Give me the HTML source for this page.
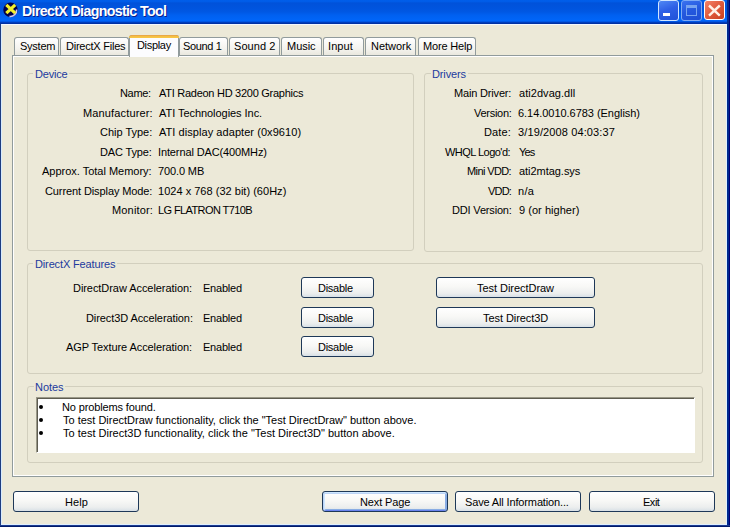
<!DOCTYPE html>
<html><head><meta charset="utf-8"><style>
html,body{margin:0;padding:0;}
body{width:731px;height:529px;overflow:hidden;background:#fff;position:relative;font-family:'Liberation Sans', sans-serif;}
div{position:absolute;box-sizing:border-box;}
.win{left:0;top:0;width:730px;height:527px;background:linear-gradient(90deg,#1E3C80 0px,#1E3C80 1px,#002A8E 1px,#002A8E 727px,#002A8E 729px,#000078 729px);}
.frb{left:0;top:525px;width:730px;height:2px;background:linear-gradient(#1A3A90 0px,#1A3A90 1px,#001A6A 1px);}
.client{left:1px;top:24px;width:726px;height:501px;background:#ECE9D8;border-left:1px solid #D8ECFF;border-top:1px solid #F4F8FF;border-right:1px solid #E0F0FF;border-bottom:1px solid #DDEEFF;}
.title{left:0px;top:0;width:727px;height:24px;background:linear-gradient(#005EEA 0px,#005CE8 1.5px,#0052DA 3px,#0054DE 8px,#0058E4 12px,#0060F0 15px,#0066FA 21px,#0048D0 22px,#0032A8 23px,#0030A0 24px);}
.frl{left:0;top:24px;width:1px;height:503px;background:#1E3C80;}
.t{font-size:11px;line-height:13px;white-space:nowrap;color:#000;}
.tt{font-size:14.2px;line-height:16px;font-weight:bold;white-space:nowrap;color:#fff;text-shadow:1px 1px 0 #0A1E8C;}
.tab{border:1px solid #919B9C;border-bottom:none;border-radius:3px 3px 0 0;background:linear-gradient(#FFFFFF,#F4F3EE 60%,#E8E6DC);}
.tabsel{border:1px solid #919B9C;border-bottom:none;border-radius:3px 3px 0 0;background:#FCFCFE;}
.tabor{border-radius:3px 3px 0 0;background:linear-gradient(#E8A848 0px,#E8A848 1px,#F4BC40 1px,#F8C848 3px);}
.panel{border:1px solid #919B9C;background:#ECE9D8;box-shadow:inset 1px 1px 0 #fff, inset -1px -1px 0 #fff;}
.grp{border:1px solid #D2CFBE;border-radius:3px;}
.gbg{background:#ECE9D8;}
.btn{border:1px solid #1E3858;border-radius:3px;background:linear-gradient(#FFFFFF,#F8F8F6 45%,#ECEEEE 80%,#D8E0E6);}
.def{box-shadow:inset 0 1px 0 #CEE7FF, inset 1px 0 0 #BCD4F6, inset -1px 0 0 #89ADE4, inset 0 -1px 0 #6982EE, inset 0 2px 0 #BCD4F6, inset 2px 0 0 #CEE7FF, inset -2px 0 0 #89ADE4, inset 0 -2px 0 #89ADE4;}
.list{background:#fff;border-top:1px solid #9A9888;border-left:1px solid #9A9888;border-right:1px solid #FFFFFF;border-bottom:1px solid #FFFFFF;box-shadow:inset 1px 1px 0 #5E5C50;}
.bul{background:#000;border-radius:2px;}
.tbb{border:1px solid #fff;border-radius:3px;}
</style></head><body>
<div class="win"></div>
<div class="title"></div>
<div class="frl"></div><div class="frb"></div>
<div class="client"></div>
<!-- icon -->
<svg style="position:absolute;left:0px;top:0px" width="22" height="22" viewBox="0 0 22 22">
<circle cx="10.5" cy="9.8" r="7.2" fill="#000048"/>
<path d="M16.6 9.5 A6.3 6.3 0 0 1 9.5 16.4" stroke="#C8C4F4" stroke-width="1.6" fill="none"/>
<path d="M6.3 4.8 L15.2 13.2 M15.2 4.8 L6.3 13.2" stroke="#F2F02C" stroke-width="3.2"/>
</svg>
<!-- title buttons -->
<div class="tbb" style="left:658px;top:0px;width:21px;height:21px;border-color:#D0E6FF;background:linear-gradient(160deg,#5088F4,#2E60E6 45%,#2052D8);"></div>
<div style="left:663px;top:13px;width:7px;height:3px;background:#fff;"></div>
<div class="tbb" style="left:681px;top:0px;width:21px;height:21px;background:linear-gradient(160deg,#3A72F0,#2458DE 50%,#1E4ED4);border-color:#7EAAF4;"></div>
<div style="left:686px;top:5px;width:11px;height:11px;border:1px solid #78A4F0;border-top-width:3px;"></div>
<div class="tbb" style="left:704px;top:0px;width:21px;height:20px;background:linear-gradient(135deg,#F48468,#E05A3C 50%,#C8401E);"></div>
<svg style="position:absolute;left:704px;top:0px" width="21" height="21" viewBox="0 0 21 21"><path d="M5 5.5 L15.8 15.6 M15.8 5.5 L5 15.6" stroke="#FFF2E6" stroke-width="2.4"/></svg>
<div class="tab" style="left:14px;top:37px;width:45px;height:19px;"></div><div class="tab" style="left:60px;top:37px;width:69px;height:19px;"></div><div class="tab" style="left:179px;top:37px;width:49px;height:19px;"></div><div class="tab" style="left:229px;top:37px;width:51px;height:19px;"></div><div class="tab" style="left:281px;top:37px;width:41px;height:19px;"></div><div class="tab" style="left:323px;top:37px;width:41px;height:19px;"></div><div class="tab" style="left:365px;top:37px;width:51px;height:19px;"></div><div class="tab" style="left:418px;top:37px;width:58px;height:19px;"></div><div class="panel" style="left:12px;top:55px;width:702px;height:422px;"></div><div class="tabsel" style="left:129px;top:35px;width:50px;height:22px;"></div><div class="tabor" style="left:129px;top:35px;width:50px;height:3px;"></div><div class="grp" style="left:27px;top:73px;width:387px;height:178px;"></div><div class="grp" style="left:424px;top:73px;width:279px;height:179px;"></div><div class="grp" style="left:27px;top:263px;width:676px;height:111px;"></div><div class="grp" style="left:27px;top:386px;width:676px;height:77px;"></div><div class="gbg" style="left:33px;top:66px;width:36px;height:15px;"></div><div class="gbg" style="left:431px;top:66px;width:37px;height:15px;"></div><div class="gbg" style="left:33px;top:256px;width:84px;height:15px;"></div><div class="gbg" style="left:34px;top:379px;width:31px;height:15px;"></div><div class="btn" style="left:301px;top:277px;width:73px;height:21px;"></div><div class="btn" style="left:301px;top:307px;width:73px;height:21px;"></div><div class="btn" style="left:301px;top:336px;width:73px;height:21px;"></div><div class="btn" style="left:436px;top:277px;width:159px;height:21px;"></div><div class="btn" style="left:436px;top:307px;width:159px;height:21px;"></div><div class="btn" style="left:13px;top:491px;width:126px;height:21px;"></div><div class="btn def" style="left:322px;top:491px;width:126px;height:21px;"></div><div class="btn" style="left:455px;top:491px;width:126px;height:21px;"></div><div class="btn" style="left:589px;top:491px;width:126px;height:21px;"></div><div class="list" style="left:36px;top:397px;width:659px;height:56px;"></div><div class="bul" style="left:39px;top:405px;width:4px;height:4px;"></div><div class="bul" style="left:39px;top:418px;width:4px;height:4px;"></div><div class="bul" style="left:39px;top:431px;width:4px;height:4px;"></div>
<div class="tt" style="left:22px;top:3px;letter-spacing:-0.64px;color:#fff;">DirectX Diagnostic Tool</div><div class="t" style="left:20px;top:40px;letter-spacing:-0.24px;">System</div><div class="t" style="left:66px;top:40px;letter-spacing:-0.23px;">DirectX Files</div><div class="t" style="left:137px;top:39px;letter-spacing:-0.32px;">Display</div><div class="t" style="left:183px;top:40px;letter-spacing:-0.37px;">Sound 1</div><div class="t" style="left:234px;top:40px;letter-spacing:0.05px;">Sound 2</div><div class="t" style="left:287px;top:40px;letter-spacing:-0.03px;">Music</div><div class="t" style="left:328px;top:40px;letter-spacing:0.10px;">Input</div><div class="t" style="left:371px;top:40px;letter-spacing:-0.03px;">Network</div><div class="t" style="left:423px;top:40px;letter-spacing:-0.17px;">More Help</div><div class="t" style="left:35px;top:68px;letter-spacing:-0.20px;color:#213A9E;">Device</div><div class="t" style="left:432px;top:68px;letter-spacing:-0.13px;color:#213A9E;">Drivers</div><div class="t" style="left:35px;top:258px;letter-spacing:-0.14px;color:#213A9E;">DirectX Features</div><div class="t" style="left:35px;top:381px;letter-spacing:-0.03px;color:#213A9E;">Notes</div><div class="t" style="left:120px;top:87px;letter-spacing:-0.33px;">Name:</div><div class="t" style="left:83px;top:107px;letter-spacing:0.15px;">Manufacturer:</div><div class="t" style="left:100px;top:126px;letter-spacing:-0.02px;">Chip Type:</div><div class="t" style="left:100px;top:146px;letter-spacing:-0.15px;">DAC Type:</div><div class="t" style="left:42px;top:165px;letter-spacing:-0.01px;">Approx. Total Memory:</div><div class="t" style="left:45px;top:185px;letter-spacing:-0.10px;">Current Display Mode:</div><div class="t" style="left:112px;top:204px;letter-spacing:0.16px;">Monitor:</div><div class="t" style="left:159px;top:87px;letter-spacing:-0.27px;">ATI Radeon HD 3200 Graphics</div><div class="t" style="left:159px;top:107px;letter-spacing:-0.05px;">ATI Technologies Inc.</div><div class="t" style="left:159px;top:126px;letter-spacing:0.06px;">ATI display adapter (0x9610)</div><div class="t" style="left:158px;top:146px;letter-spacing:-0.12px;">Internal DAC(400MHz)</div><div class="t" style="left:158px;top:165px;letter-spacing:-0.12px;">700.0 MB</div><div class="t" style="left:158px;top:185px;letter-spacing:0.02px;">1024 x 768 (32 bit) (60Hz)</div><div class="t" style="left:158px;top:204px;letter-spacing:-0.60px;">LG FLATRON T710B</div><div class="t" style="left:454px;top:87px;letter-spacing:-0.17px;">Main Driver:</div><div class="t" style="left:474px;top:107px;letter-spacing:-0.27px;">Version:</div><div class="t" style="left:484px;top:126px;letter-spacing:0.15px;">Date:</div><div class="t" style="left:445px;top:146px;letter-spacing:-0.53px;">WHQL Logo'd:</div><div class="t" style="left:467px;top:165px;letter-spacing:-0.61px;">Mini VDD:</div><div class="t" style="left:488px;top:185px;letter-spacing:-0.80px;">VDD:</div><div class="t" style="left:452px;top:204px;letter-spacing:-0.17px;">DDI Version:</div><div class="t" style="left:519px;top:87px;letter-spacing:0.05px;">ati2dvag.dll</div><div class="t" style="left:518px;top:107px;letter-spacing:-0.04px;">6.14.0010.6783 (English)</div><div class="t" style="left:518px;top:126px;letter-spacing:0.12px;">3/19/2008 04:03:37</div><div class="t" style="left:519px;top:146px;letter-spacing:-0.80px;">Yes</div><div class="t" style="left:519px;top:165px;letter-spacing:-0.04px;">ati2mtag.sys</div><div class="t" style="left:518px;top:185px;letter-spacing:0.35px;">n/a</div><div class="t" style="left:519px;top:204px;letter-spacing:0.04px;">9 (or higher)</div><div class="t" style="left:73px;top:282px;letter-spacing:-0.06px;">DirectDraw Acceleration:</div><div class="t" style="left:86px;top:312px;letter-spacing:-0.09px;">Direct3D Acceleration:</div><div class="t" style="left:66px;top:341px;letter-spacing:-0.08px;">AGP Texture Acceleration:</div><div class="t" style="left:203px;top:282px;letter-spacing:-0.22px;">Enabled</div><div class="t" style="left:203px;top:312px;letter-spacing:-0.22px;">Enabled</div><div class="t" style="left:203px;top:341px;letter-spacing:-0.22px;">Enabled</div><div class="t" style="left:318px;top:282px;letter-spacing:-0.27px;">Disable</div><div class="t" style="left:318px;top:312px;letter-spacing:-0.27px;">Disable</div><div class="t" style="left:318px;top:341px;letter-spacing:-0.27px;">Disable</div><div class="t" style="left:477px;top:282px;letter-spacing:-0.04px;">Test DirectDraw</div><div class="t" style="left:483px;top:312px;letter-spacing:-0.07px;">Test Direct3D</div><div class="t" style="left:62px;top:401px;letter-spacing:-0.13px;">No problems found.</div><div class="t" style="left:63px;top:414px;letter-spacing:-0.01px;">To test DirectDraw functionality, click the "Test DirectDraw" button above.</div><div class="t" style="left:63px;top:427px;letter-spacing:0.01px;">To test Direct3D functionality, click the "Test Direct3D" button above.</div><div class="t" style="left:65px;top:496px;letter-spacing:0.07px;">Help</div><div class="t" style="left:360px;top:496px;letter-spacing:-0.14px;">Next Page</div><div class="t" style="left:465px;top:496px;letter-spacing:-0.14px;">Save All Information...</div><div class="t" style="left:643px;top:496px;letter-spacing:-0.47px;">Exit</div>
</body></html>
